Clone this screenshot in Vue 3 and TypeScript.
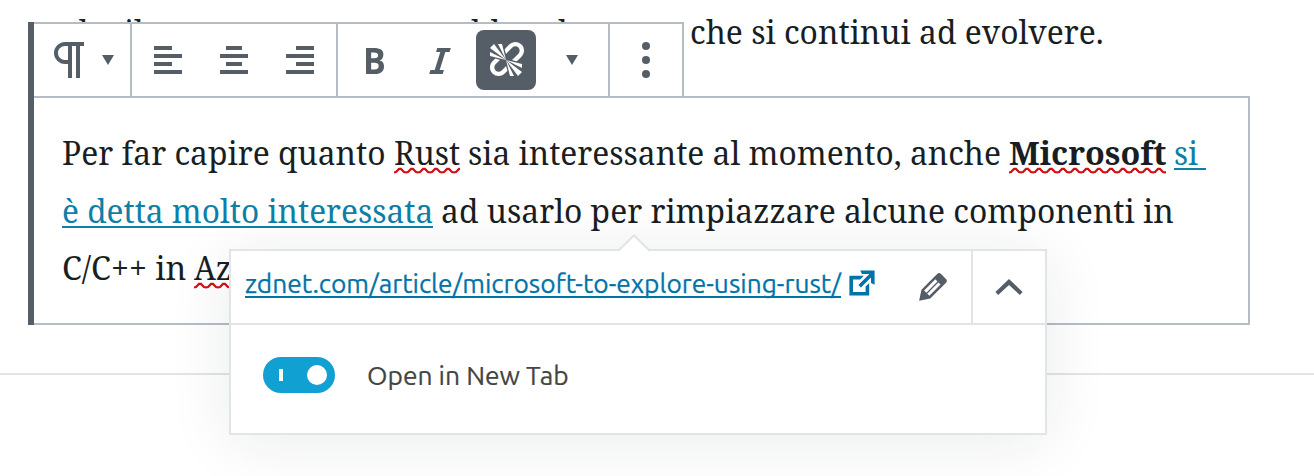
<script setup lang="ts">
import type { Directive } from 'vue'

interface Run { text: string; width: number; kind?: string; gap?: number }

// Condenses a run of text so that it fills the column width given to it.
const vFit: Directive<HTMLElement, number> = {
  mounted(el, { value }) {
    el.style.transform = `scaleX(${value / el.offsetWidth})`
  },
}

const previous: Run[] = [
  { text: 'al', width: 27 },
  { text: 'il', width: 19, gap: 36 },
  { text: 'abbandono', width: 172, gap: 310 },
  { text: 'che si continui ad evolvere.', width: 414, gap: 65 },
]
const lines: Run[][] = [
  [
    { text: 'Per far capire quanto', width: 324 },
    { text: 'Rust', width: 66, kind: 'misspelt', gap: 8 },
    { text: 'sia interessante al momento, anche', width: 533, gap: 8 },
    { text: 'Microsoft', width: 157, kind: 'misspelt strong', gap: 8 },
    { text: 'si', width: 24, kind: 'link trailing', gap: 8 },
  ],
  [
    { text: 'è detta molto interessata', width: 371, kind: 'link' },
    { text: 'ad usarlo per rimpiazzare alcune componenti in', width: 733, gap: 8 },
  ],
  [
    { text: 'C/C++ in', width: 124 },
    { text: 'Az', width: 38, kind: 'misspelt', gap: 8 },
  ],
]
const aligns = [
  'M12 5V3H3v2h9zm5 4V7H3v2h14zm-5 4v-2H3v2h9zm5 4v-2H3v2h14z',
  'M14 5V3H6v2h8zm3 4V7H3v2h14zm-3 4v-2H6v2h8zm3 4v-2H3v2h14z',
  'M17 5V3H8v2h9zm0 4V7H3v2h14zm0 4v-2H8v2h9zm0 4v-2H3v2h14z',
]
const formats = [
  'M6 4v13h4.54c1.37 0 2.46-.33 3.26-1 .8-.66 1.2-1.58 1.2-2.77 0-.84-.17-1.51-.51-2.01s-.9-.85-1.67-1.03v-.09c.57-.1 1.02-.4 1.36-.9s.51-1.13.51-1.91c0-1.14-.39-1.98-1.17-2.5C12.75 4.26 11.5 4 9.78 4H6zm2.57 5.15V6.26h1.36c.73 0 1.27.11 1.61.32.34.22.51.58.51 1.07 0 .54-.16.92-.47 1.15s-.82.35-1.51.35h-1.5zm0 2.19h1.6c1.44 0 2.16.53 2.16 1.61 0 .6-.17 1.05-.51 1.34s-.86.43-1.57.43H8.57v-3.38z',
  'M14.78 6h-2.13l-2.8 9h2.12l-.62 2H4.6l.62-2h2.14l2.8-9H8.03l.62-2h6.75z',
]
const unlink = 'M17.74 2.26c1.68 1.69 1.68 4.41 0 6.1l-1.53 1.52c-.32.33-.69.58-1.08.77L13 10l1.69-1.64.76-.77.76-.76c.84-.84.84-2.2 0-3.04-.84-.85-2.2-.85-3.04 0l-.77.76-.76.76L10 7l-.65-2.14c.19-.38.44-.75.77-1.07l1.52-1.53c1.69-1.68 4.42-1.68 6.1 0zM2 4l8 6-6-8zm4-2l4 8-2-8H6zM2 6l8 4-8-2V6zm7.36 7.69L10 13l.74 2.35-1.38 1.39c-1.69 1.68-4.41 1.68-6.1 0-1.68-1.68-1.68-4.42 0-6.1l1.39-1.38L7 10l-.69.64-1.52 1.53c-.85.84-.85 2.2 0 3.04.84.85 2.2.85 3.04 0zM18 16l-8-6 6 8zm-4 2l-4-8 2 8h2zm4-4l-8-4 8 2v2z'
</script>

<template>
  <main class="editor">
    <p class="line previous">
      <span v-for="r in previous" :key="r.text" class="run" :style="{ width: r.width + 'px', marginLeft: (r.gap ?? 0) + 'px' }"><span v-fit="r.width" class="ink">{{ r.text }}</span></span>
    </p>
    <section class="block">
      <p v-for="(line, i) in lines" :key="i" class="line">
        <span v-for="r in line" :key="r.text" class="run" :class="r.kind" :style="{ width: r.width + 'px', marginLeft: (r.gap ?? 0) + 'px' }"><span v-fit="r.width" class="ink">{{ r.text }}</span><svg v-if="r.kind?.includes('misspelt')" class="wave" :width="r.width" height="7"><defs><pattern :id="'w' + r.text" width="12" height="7" patternUnits="userSpaceOnUse"><path d="M-2 4.3L0 5.4 2 5 5 1.9 7 1.9 10 5 12 5.4 14 5" /></pattern></defs><rect :width="r.width" height="7" :fill="`url(#w${r.text})`" /></svg></span>
      </p>
    </section>
    <hr class="rule">

    <nav class="toolbar">
      <div class="group type">
        <svg width="48" height="48" viewBox="0 0 24 24"><path d="M11 5v7H9.5C7.6 12 6 10.4 6 8.5S7.6 5 9.5 5H11m8-2H9.5C6.5 3 4 5.5 4 8.5S6.5 14 9.5 14H11v7h2V5h2v16h2V5h2V3z" /></svg>
        <svg class="caret" width="12" height="10" viewBox="0 0 12 10"><path d="M0 0h12L6 10z" /></svg>
      </div>
      <div class="group">
        <button v-for="d in aligns" :key="d"><svg width="40" height="40" viewBox="0 0 20 20"><path :d="d" /></svg></button>
      </div>
      <div class="group">
        <button v-for="d in formats" :key="d"><svg width="40" height="40" viewBox="0 0 20 20"><path :d="d" /></svg></button>
        <button class="active"><svg width="40" height="40" viewBox="0 0 20 20"><path :d="unlink" /></svg></button>
        <button><svg width="12" height="10" viewBox="0 0 12 10"><path d="M0 0h12L6 10z" /></svg></button>
      </div>
      <div class="group">
        <button><svg width="40" height="40" viewBox="0 0 40 40"><circle cx="20" cy="6" r="4" /><circle cx="20" cy="20" r="4" /><circle cx="20" cy="34" r="4" /></svg></button>
      </div>
    </nav>

    <aside class="popover">
      <svg class="arrow" width="34" height="18" viewBox="0 0 34 18"><path class="fill" d="M1 18L17 2l16 16z" /><path class="edge" d="M1 17L17 1.5 33 17" /></svg>
      <div class="address">
        <a class="url"><span class="urltext"><span v-fit="596" class="ink">zdnet.com/article/microsoft-to-explore-using-rust/</span></span>
          <svg class="external" width="36" height="36" viewBox="0 0 20 20"><path d="M9 3h8v8l-2-1V6.92l-5.6 5.59-1.41-1.41L14.08 5H10zm3 12v-3l2-2v7H3V6h8L9 8H5v7h7z" /></svg></a>
        <button class="edit"><svg width="40" height="40" viewBox="0 0 20 20"><path d="M13.89 3.39l2.71 2.72c.46.46.42 1.24.03 1.64l-8.01 8.02-5.56 1.16 1.16-5.58s7.6-7.63 7.99-8.03c.39-.39 1.22-.39 1.68.07zm-2.73 2.79l-5.59 5.61 1.11 1.11 5.54-5.65zm-2.97 8.23l5.58-5.6-1.07-1.08-5.59 5.6z" /></svg></button>
        <button class="collapse"><svg width="28" height="16" viewBox="0 0 28 16"><path d="M14 0L27.6 13 24.8 16 14 6 3.2 16 .4 13z" /></svg></button>
      </div>
      <div class="options">
        <span class="toggle"><i class="tick" /><i class="knob" /></span>
        <span class="label"><span v-fit="202" class="ink">Open in New Tab</span></span>
      </div>
    </aside>
  </main>
</template>

<style>
body { margin: 0; background: #fff; }
</style>
<style scoped>
* { box-sizing: border-box; }
.editor { position: relative; width: 1314px; height: 476px; overflow: hidden; background: #fff; }
.line { display: flex; height: 57.6px; margin: 0; font: 32.5px/57px "Noto Serif", "DejaVu Serif Condensed", "DejaVu Serif", serif; color: #191e23; white-space: nowrap; }
.previous { padding-left: 61px; height: 96px; line-height: 63px; }
.run { position: relative; flex: none; display: block; }
.ink { display: inline-block; transform-origin: 0 50%; white-space: nowrap; }
.strong { font-weight: 700; }
.link { color: #0e7fa8; }
.link::after { content: ""; position: absolute; left: 0; right: 0; top: 44px; height: 2px; background: #0e7fa8; }
.trailing::after { right: -8px; }
.wave { position: absolute; left: 0; top: 43px; }
.wave path { fill: none; stroke: #d40f14; stroke-width: 2.2; }
.block { height: 229px; width: 1222px; margin-left: 28px; padding: 26px 0 0 28px; border: 2px solid #b5bcc2; border-left: 6px solid #555d66; }
.rule { margin: 48px 0 0; border: 0; height: 2px; background: #e2e4e7; }
button { width: 60px; height: 60px; padding: 0; border: 0; border-radius: 8px; background: none; display: flex; align-items: center; justify-content: center; }
svg { display: block; flex: none; fill: #555d66; }
.toolbar { position: absolute; left: 28px; top: 22px; display: flex; height: 76px; background: #fff; border: 2px solid #b5bcc2; border-left: 6px solid #555d66; border-right: 0; }
.toolbar::before { content: ""; position: absolute; left: -6px; top: -2px; width: 6px; height: 303px; background: #555d66; }
.group { display: flex; align-items: center; gap: 6px; padding: 0 6px; border-right: 2px solid #b5bcc2; }
.type { width: 98px; padding: 0 0 0 12px; gap: 8px; }
.active { background: #555d66; }
.active svg { fill: #fff; }
.popover { position: absolute; left: 229px; top: 249px; width: 818px; height: 186px; background: #fff; border: 2px solid #e2e4e7; box-shadow: 0 6px 60px rgba(25, 30, 45, .09); font-family: Ubuntu, "Noto Sans", "Open Sans", sans-serif; }
.arrow { position: absolute; left: 386px; top: -17px; }
.arrow .fill { fill: #fff; }
.arrow .edge { fill: none; stroke: #e2e4e7; stroke-width: 2; }
.address { display: flex; align-items: center; height: 74px; border-bottom: 2px solid #e2e4e7; }
.url { display: flex; width: 672px; height: 72px; padding-left: 14px; }
.urltext { position: relative; width: 596px; height: 72px; font-size: 26px; line-height: 65px; color: #0073a8; -webkit-text-stroke: .25px #0073a8; }
.urltext::after { content: ""; position: absolute; left: 0; right: 0; top: 45px; height: 2px; background: #0073a8; }
.external { margin: 14px 0 0 3px; fill: #0073a8; }
.edit { width: 88px; height: 72px; margin-left: -20px; padding-left: 12px; }
.collapse { width: 74px; height: 72px; border-left: 2px solid #e2e4e7; border-radius: 0; }
.options { display: flex; align-items: center; height: 100px; padding-left: 32px; }
.toggle { display: flex; align-items: center; justify-content: space-between; width: 72px; height: 36px; border-radius: 18px; background: #11a0d2; padding: 0 8px 0 16px; }
.tick { width: 4px; height: 12px; background: #fff; }
.knob { width: 20px; height: 20px; border-radius: 50%; background: #fff; }
.label { margin: 1px 0 0 32px; font-size: 26px; line-height: 36px; color: #444; -webkit-text-stroke: .2px #444; }
</style>
